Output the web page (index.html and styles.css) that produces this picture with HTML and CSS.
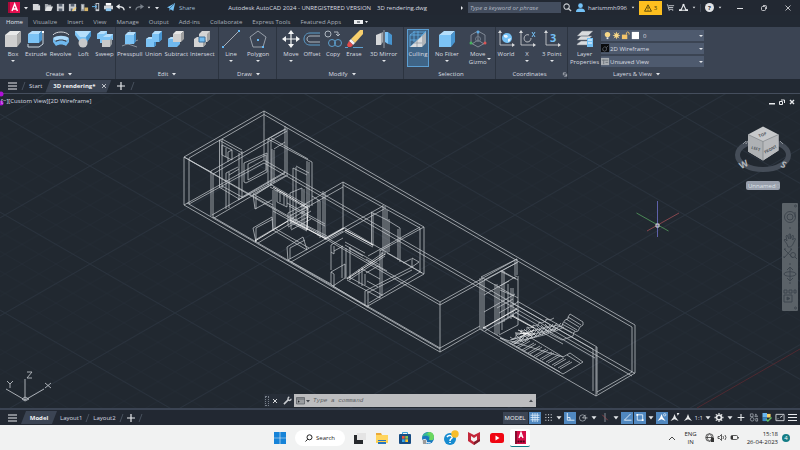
FILE: index.html
```html
<!DOCTYPE html>
<html lang="en">
<head>
<meta charset="utf-8">
<title>Autodesk AutoCAD 2024 - 3D rendering.dwg</title>
<link rel="stylesheet" href="styles.css">
</head>
<body>
<svg class="defs" aria-hidden="true">
  <defs>
    <symbol id="box-grey" viewBox="0 0 18 18"><path fill="#e9e9e9" d="M1 5 6 1h11l-4 4z"/><path fill="#cfcfcf" d="M1 5h12v12H1z"/><path fill="#a9a9a9" d="m13 5 4-4v11l-4 5z"/></symbol>
    <symbol id="box-blue" viewBox="0 0 18 18"><path fill="#b5defb" d="M1 5 6 1h11l-4 4z"/><path fill="#7cc3f5" d="M1 5h12v12H1z"/><path fill="#4794cf" d="m13 5 4-4v11l-4 5z"/></symbol>
    <symbol id="caret" viewBox="0 0 6 4"><path fill="#e3e6ea" d="M1 1h4L3 3.5z"/></symbol>
    <symbol id="menu" viewBox="0 0 10 8"><path stroke="#e8eaed" stroke-width="1.2" d="M0 1h9M0 4h9M0 7h9"/></symbol>
    <symbol id="plus" viewBox="0 0 8 8"><path stroke="#e8eaed" stroke-width="1.2" d="M4 0v8M0 4h8"/></symbol>
  </defs>
</svg>

<header class="titlebar">
  <div class="quick">
    <button class="logo" aria-label="Application menu"><svg viewBox="0 0 12 12"><path fill="#e51050" d="M0 0h12v11H0z"/><path fill="#a80b3a" d="M0 0h2v11H0z"/><path fill="none" stroke="#fff" stroke-width="1.4" d="m4 9 2.700-7L9.400 9M5 7h3.500"/></svg></button>
    <svg class="arrow"><use href="#caret"/></svg>
    <button class="qa" aria-label="New"><svg viewBox="0 0 10 10"><path fill="#d5d7da" d="M1 1h6l2 2v5H1z"/><path fill="#8d939b" d="M7 1v2h2z"/></svg></button>
    <button class="qa" aria-label="Open"><svg viewBox="0 0 10 10"><path fill="#a5a9af" d="M1 1h3l1 1h3v6H1z"/><path fill="#e0e2e4" d="M3 4h7L8 9H1z"/></svg></button>
    <button class="qa" aria-label="Save"><svg viewBox="0 0 10 10"><path fill="#c7cacf" d="M1 1h8v8H1z"/><path fill="#596270" d="M3 1h4v3H3zM3 6h4v3H3z"/></svg></button>
    <button class="qa" aria-label="Save as"><svg viewBox="0 0 10 10"><path fill="#c7cacf" d="M1 1h8v8H1z"/><path fill="#596270" d="M3 1h4v3H3zM3 6h2v3H3z"/><path stroke="#f5cf72" stroke-width="1.500" d="m5 9 4-4"/></svg></button>
    <button class="qa" aria-label="Open from web"><svg viewBox="0 0 10 10"><path fill="#8d939b" d="M1 1h4v8H1z"/><path fill="#cdd0d4" d="M2 2h2v5H2z"/><path fill="#d7b467" d="M5 5h4v4H5z"/></svg></button>
    <button class="qa" aria-label="Save to mobile"><svg viewBox="0 0 10 10"><path fill="#c7cacf" d="M4 0h4v9H4z"/><path fill="#283240" d="M5 1h2v6H5z"/><path stroke="#69b9f1" d="M0 4h5M3 2l2 2-2 2" fill="none"/></svg></button>
    <button class="qa" aria-label="Plot"><svg viewBox="0 0 10 10"><path fill="#fff" d="M2 0h6v3H2z"/><path fill="#d0d3d7" d="M0 3h10v4H0z"/><path fill="#8ac5ee" d="M2 6h6v3H2z"/></svg></button>
    <button class="qa" aria-label="Undo"><svg viewBox="0 0 10 10"><path fill="none" stroke="#e8eaed" stroke-width="1.500" d="M9 8c0-3-3-4-6-4"/><path fill="#e8eaed" d="m0 4 4-3v6z"/></svg></button>
    <svg class="arrow small"><use href="#caret"/></svg>
    <button class="qa" aria-label="Redo"><svg viewBox="0 0 10 10"><path fill="none" stroke="#7a818b" stroke-width="1.200" d="M1 8c0-3 3-4 6-4"/><path fill="#7a818b" d="M10 4 6 1v6z"/></svg></button>
    <svg class="arrow small"><use href="#caret"/></svg>
    <svg class="arrow"><use href="#caret"/></svg>
    <button class="share"><svg viewBox="0 0 10 10"><path fill="#74c2f7" d="m0 5 9-5-2 9-3-2-1 2-.5-3.500z"/><path stroke="#283240" stroke-width=".6" d="m3 6 5-5"/></svg>Share</button>
  </div>
  <h1 class="title"><span>Autodesk AutoCAD 2024 - UNREGISTERED VERSION</span><span>3D rendering.dwg</span></h1>
  <div class="account">
    <svg class="play" viewBox="0 0 4 6"><path fill="#e8eaed" d="m1 1 2 2-2 2z"/></svg>
    <input class="keyword" type="text" aria-label="Search help" placeholder="Type a keyword or phrase">
    <button class="qa" aria-label="Search"><svg viewBox="0 0 10 10"><circle cx="4" cy="4" r="3" fill="none" stroke="#c8ccd1" stroke-width="1.200"/><path stroke="#c8ccd1" stroke-width="1.500" d="m6 6 3 3"/></svg></button>
    <button class="user"><svg viewBox="0 0 10 10"><circle cx="5" cy="3" r="2.600" fill="#74c2f7"/><path fill="#74c2f7" d="M0 10c0-4 3-4 5-4s5 0 5 4z"/></svg>harismmh996</button>
    <svg class="arrow small"><use href="#caret"/></svg>
    <button class="badge"><svg viewBox="0 0 10 10"><path fill="none" stroke="#3e3306" d="m5 1 4.300 8H.7zM5 3.500v3M5 7.200v1"/></svg>3</button>
    <button class="qa" aria-label="App store"><svg viewBox="0 0 10 10"><path fill="none" stroke="#c8ccd1" d="M1 2h1l1 5h5M3 3h6M3 5h5"/><path fill="#c8ccd1" d="M3 8h1v1H3zM7 8h1v1H7z"/></svg></button>
    <button class="qa" aria-label="Autodesk"><svg viewBox="0 0 10 10"><path fill="none" stroke="#e8eaed" stroke-width="1.200" d="M2 8 5 2l3 6z"/><path fill="#e8eaed" d="M0 7h3v2H0zM7 7h3v2H7zM4 1h2v2H4z"/></svg></button>
    <svg class="arrow small"><use href="#caret"/></svg>
    <span class="rule"></span>
    <button class="help">?</button>
    <svg class="arrow small"><use href="#caret"/></svg>
  </div>
  <div class="window-buttons">
    <button aria-label="Minimize"><svg viewBox="0 0 8 8"><path stroke="#dfe1e4" d="M1 4.500h6"/></svg></button>
    <button aria-label="Restore"><svg viewBox="0 0 8 8"><rect x="1.500" y="2.500" width="4" height="4" rx="1" fill="none" stroke="#dfe1e4" stroke-width=".8"/><path fill="none" stroke="#dfe1e4" stroke-width=".8" d="M3 1.500h2.500q1 0 1 1V5"/></svg></button>
    <button aria-label="Close"><svg viewBox="0 0 8 8"><path stroke="#dfe1e4" stroke-width=".8" d="m1.500 1.500 5 5m0-5-5 5"/></svg></button>
  </div>
</header>

<nav class="ribbon-tabs">
  <button class="on">Home</button><button>Visualize</button><button>Insert</button><button>View</button><button>Manage</button><button>Output</button><button>Add-ins</button><button>Collaborate</button><button>Express Tools</button><button>Featured Apps</button>
  <button class="ribbon-toggle" aria-label="Minimize ribbon"><svg viewBox="0 0 16 6"><path fill="#eceef0" d="M0 1h9v4H0z"/><path fill="#29313c" d="M3 2.500h3v1H3z"/><path fill="#eceef0" d="M11 2h3l-1.500 2z"/></svg></button>
</nav>

<section class="ribbon">
  <div class="panel create">
    <div class="tools">
      <button class="tool"><svg><use href="#box-grey"/></svg>Box<i></i></button>
      <button class="tool"><svg viewBox="0 0 18 18"><path fill="#b5defb" d="m1 4 4-3h10l-3 3z"/><path fill="#7cc3f5" d="M1 4h11v9H1z"/><path fill="#4794cf" d="m12 4 3-3v9l-3 3z"/><path fill="none" stroke="#c7d4df" d="M1 14v3h11l4-3V2"/><path fill="#fff" d="M15 1h2v2h-2z"/></svg>Extrude</button>
      <button class="tool"><svg viewBox="0 0 18 18"><path fill="none" stroke="#d4d7db" d="M1 5c3-4 13-4 16 0"/><path fill="#aad9fa" d="M1 8c4-3 12-3 16 0l-2 3c-3-2-9-2-12 0z"/><path fill="#6fb9ef" d="M1 8v4l3 4v-4zm3 4c3-2 7-2 10 0v4c-3-2-7-2-10 0zm10 0 3-4v4l-3 4z"/></svg>Revolve</button>
      <button class="tool"><svg viewBox="0 0 18 18"><path fill="#7cc3f5" d="M1 1h16v4l-4 7H6L1 5z"/><path fill="#b5defb" d="M1 1h16l-5 6H6z"/><path fill="#4794cf" d="M17 1v5l-4 6-1-5z"/><circle cx="9" cy="13" r="4.500" fill="#c8c9ca"/></svg>Loft</button>
      <button class="tool"><svg viewBox="0 0 18 18"><path fill="#7cc3f5" d="M1 4 5 1h6v3h6v6h-6v3H4V9H1z"/><path fill="#b5defb" d="m1 4 4-3h6L8 4zm7 2 3-2h6l-3 3H7z"/><path fill="#c8c9ca" d="M6 10h8v7H6z"/><path fill="#999da1" d="m14 10 2-2v6l-2 3z"/></svg>Sweep</button>
    </div>
    <div class="caption">Create<svg><use href="#caret"/></svg></div>
  </div>
  <div class="panel edit">
    <div class="tools">
      <button class="tool"><svg viewBox="0 0 18 18"><path stroke="#abb3bc" stroke-width=".7" d="M1 16 17 10M4 13l12 4M9 0v4"/><path fill="#b5defb" d="m4 5 3-3h8l-2 3z"/><path fill="#7cc3f5" d="M4 5h9v9H4z"/><path fill="#4794cf" d="m13 5 2-3v9l-2 3z"/></svg>Presspull</button>
      <button class="tool"><svg viewBox="0 0 18 18"><path fill="#7cc3f5" d="M1 9l3-2h3V4l3-3h7v8l-3 3h-3v3l-2 2H1z"/><path fill="#b5defb" d="m7 4 3-3h7l-3 3zM1 9l3-2h3v2z"/><path fill="#4794cf" d="m14 4 3-3v8l-3 3zM10 12h1v3l-2 2v-5z"/></svg>Union</button>
      <button class="tool"><svg viewBox="0 0 18 18"><path fill="#6fb9ef" d="M1 9l3-2h9v7l-3 3H1z"/><path fill="#b5defb" d="m1 9 3-2h9l-3 2z"/><path fill="#e6e6e6" d="m6 4 3-3h8l-3 3z"/><path fill="#cfcfcf" d="M6 4h8v8H6z"/><path fill="#a0a0a0" d="m14 4 3-3v8l-3 3z"/></svg>Subtract</button>
      <button class="tool"><svg viewBox="0 0 18 18"><path fill="#d4d4d4" d="m6 4 3-3h8v8l-3 3H6zM1 9l3-2h9v7l-3 3H1z"/><path fill="#a0a0a0" d="m14 4 3-3v8l-3 3zM10 12l3-2v4l-3 3z"/><path fill="#72bdf2" stroke="#3b6f9b" d="M6 7h6v5H6z"/></svg>Intersect</button>
    </div>
    <div class="caption">Edit<svg><use href="#caret"/></svg></div>
  </div>
  <div class="panel draw">
    <div class="tools">
      <button class="tool"><svg viewBox="0 0 18 18"><path stroke="#c2c8cf" stroke-width=".8" d="M1 17 17 1"/><path fill="#64b5f0" d="M0 16h2v2H0zM16 0h2v2h-2z"/></svg>Line<i></i></button>
      <button class="tool"><svg viewBox="0 0 18 18"><path fill="none" stroke="#aeb6bf" stroke-width=".8" d="m9 1 8 6-3 10H4L1 7z"/><path fill="#64b5f0" d="M8 9h2v2H8zM13 16h2v2h-2z"/></svg>Polygon<i></i></button>
    </div>
    <div class="caption">Draw<svg><use href="#caret"/></svg></div>
  </div>
  <div class="panel modify">
    <div class="tools">
      <button class="tool"><svg viewBox="0 0 18 18"><path stroke="#f4f5f6" stroke-width="1.200" d="M9 2v14M2 9h14"/><path fill="#f4f5f6" d="m9 0 3 4H6zm0 18 3-4H6zM0 9l4-3v6zm18 0-4-3v6z"/></svg>Move<i></i></button>
      <button class="tool"><svg viewBox="0 0 18 18"><path fill="none" stroke="#5d9fcd" d="M17 3H7C-1 3-1 15 7 15h10"/><path fill="none" stroke="#aeb6bf" d="M17 6H7C3 6 3 12 7 12h10"/></svg>Offset</button>
      <button class="tool"><svg viewBox="0 0 18 18"><g fill="none" stroke="#aeb6bf"><circle cx="4" cy="4" r="3"/><path d="M10 2h4v4M12 4l2 2 2-2"/></g><g fill="none" stroke="#5d9fcd"><circle cx="8" cy="13" r="3.500"/><circle cx="14" cy="13" r="3.500"/></g></svg>Copy</button>
      <button class="tool"><svg viewBox="0 0 18 18"><path fill="#f7cf6d" d="M15 0h3v4l-8 9-4-4z"/><path fill="#f3f3f3" d="m6 9 4 4-2 2-4-4z"/><path fill="#e24b4b" d="m4 11 4 4-2 2H3l-1-2z"/><path stroke="#5d9fcd" d="M0 17.500h3M8 17.500h10"/></svg>Erase</button>
      <button class="tool mirror"><svg viewBox="0 0 18 18"><path fill="#d5d7d9" d="M1 5 6 3v12H1z"/><path fill="#9fa4aa" d="m6 3 2-1v10l-2 3z"/><path fill="#7cc3f5" d="M10 2h3v12l-3-2z"/><path fill="#4794cf" d="m13 2 4 3v10l-4-1z"/><path stroke="#d5d7d9" stroke-width=".6" d="M9 0v18"/></svg>3D Mirror<i></i></button>
    </div>
    <div class="caption">Modify<svg><use href="#caret"/></svg></div>
  </div>
  <div class="panel selection">
    <div class="tools">
      <button class="tool on"><svg viewBox="0 0 18 18"><path fill="none" stroke="#5fb0e9" stroke-width=".8" d="M1 5h12v12M1 5v12l16-15H5L1 5m4-4v11M9 1v8M13 5l4-4M1 10h8"/><path fill="#d9dcdf" d="m1 17 12-11v11z"/><path fill="#aeb3b8" d="m13 6 4-4v11l-4 4z"/><path stroke="#7c8792" stroke-width=".6" d="M8 10v7M5 13h8"/></svg>Culling</button>
      <button class="tool"><svg><use href="#box-blue"/></svg>No Filter<i></i></button>
      <button class="tool two"><svg viewBox="0 0 18 18"><path fill="none" stroke="#929ba6" stroke-width=".8" d="m9 1 7 4v8l-7 4-7-4V5zM9 10V3M9 10l-6 4M9 10l6 4"/><circle cx="9" cy="9" r="2.500" fill="none" stroke="#6f7b88"/><circle cx="9" cy="2" r="1.500" fill="#5aa9e6"/><circle cx="2" cy="13" r="1.500" fill="#45b05c"/><circle cx="16" cy="13" r="1.500" fill="#d95555"/></svg>Move<br>Gizmo<i></i></button>
    </div>
    <div class="caption">Selection</div>
  </div>
  <div class="panel coords">
    <div class="tools">
      <button class="tool"><svg viewBox="0 0 18 18"><path fill="none" stroke="#d5d7d9" stroke-width=".8" d="M3 1v14h14"/><path fill="#d5d7d9" d="M3 0 1 3h4zM18 15l-3-2v4z"/><circle cx="10" cy="8" r="5" fill="#75c1f5"/><path fill="#e6f3fc" d="M7 5h3l1 2-2 1-2-1zM11 9l3-1-1 3-2 1z"/></svg>World</button>
      <button class="tool"><svg viewBox="0 0 18 18"><path fill="none" stroke="#d5d7d9" stroke-width=".8" d="M3 1v14h14M11 5c-5-2-7 6-2 7 3 0 4-2 4-4"/><path fill="#d5d7d9" d="M3 0 1 3h4zM18 15l-3-2v4z"/><path stroke="#75c1f5" d="m14 2 3 5m0-5-3 5"/></svg>X<i></i></button>
      <button class="tool"><svg viewBox="0 0 18 18"><path fill="none" stroke="#d5d7d9" stroke-width=".8" d="M3 1v14h14"/><path fill="#d5d7d9" d="M3 0 1 3h4zM18 15l-3-2v4z"/><text x="7" y="12" fill="#75c1f5" font-size="11" font-weight="700">3</text></svg>3 Point<i></i></button>
    </div>
    <div class="caption">Coordinates<svg class="launch" viewBox="0 0 6 6"><path fill="none" stroke="#c8ccd1" stroke-width=".8" d="M1 4V1h3M2 2l3 3V2M5 5H2"/></svg></div>
  </div>
  <div class="panel layers">
    <div class="tools">
      <button class="tool two"><svg viewBox="0 0 18 18"><path fill="#d9dbdd" stroke="#6c7480" stroke-width=".5" d="m1 14 4-3h11l-4 4H1zm0-4 4-4h11l-4 4zm0-4 5-5h11l-5 5z"/><path fill="#75c1f5" d="M11 8h6v9h-6z"/><path stroke="#fff" d="M12 10h4M12 13h4"/></svg>Layer<br>Properties</button>
      <div class="selects">
        <label class="layer-select"><svg viewBox="0 0 40 10"><circle cx="5" cy="4" r="3" fill="#f6d788"/><path fill="#e5e7e9" d="M4 7h2v2H4z"/><circle cx="15" cy="5" r="2.500" fill="#f6d788"/><path stroke="#f6d788" stroke-width=".8" d="M15 1v8M11 5h8m-7-3 6 6m0-6-6 6"/><path fill="#f6c56a" d="M21 4h6v5h-6z"/><path fill="none" stroke="#f6c56a" d="M26 4V2q1.500-2 3 0v2"/><path fill="#fff" d="M32 1h8v8h-8z"/></svg><select aria-label="Layer"><option>0</option></select><i></i></label>
        <label><svg viewBox="0 0 10 10"><path fill="#0a0b0d" d="M0 0h9v9H0z"/><path fill="none" stroke="#87909a" stroke-width=".6" d="M2 5l2-2 2 1v3L4 8 2 7zM6 4l2-2"/></svg><select aria-label="Visual style"><option>2D Wireframe</option></select><i></i></label>
        <label><svg viewBox="0 0 10 10"><path fill="#a9adb2" d="M0 1h9v8H0z"/><path stroke="#6c737b" d="M1 3.500h7M3 3v5M5 6h3"/></svg><select aria-label="View"><option>Unsaved View</option></select><i></i></label>
      </div>
    </div>
    <div class="caption">Layers &amp; View<svg><use href="#caret"/></svg></div>
  </div>
</section>

<nav class="doc-tabs">
  <button class="burger" aria-label="File tabs menu"><svg><use href="#menu"/></svg></button>
  <span class="slash"></span>
  <button>Start</button>
  <button class="active">3D rendering*<svg viewBox="0 0 6 6"><path stroke="#c8ccd1" stroke-width=".9" d="m1 1 4 4m0-4L1 5"/></svg></button>
  <button class="add" aria-label="New drawing"><svg><use href="#plus"/></svg></button>
  <span class="slash"></span>
</nav>

<main class="viewport">
  <svg class="model" viewBox="0 94 800 314" preserveAspectRatio="xMidYMid slice" role="img" aria-label="Wireframe of a building">
    <defs>
      <pattern id="minor" width="34" height="19.600" patternUnits="userSpaceOnUse" x="5" y="-.6"><path fill="none" stroke="#252d37" stroke-width=".6" d="M0 0 34 19.600M0 19.600 34 0"/></pattern>
      <pattern id="major" width="170" height="98" patternUnits="userSpaceOnUse" x="5" y="19"><path fill="none" stroke="#2b343f" stroke-width=".8" d="m0 0 170 98M0 98 170 0"/></pattern>
    </defs>
    <path fill="url(#minor)" d="M0 94h800v314H0z"/>
    <path fill="url(#major)" d="M0 94h800v314H0z"/>
    <path stroke="#5b2a31" stroke-width=".8" d="m697 408 103-59"/>
    <g class="wire">
      <!-- outer shell -->
      <path d="M184 157 264 111 635 325V373L596 396 480 329 440 352 184 205zM189 158 264 114.500 632 327V372L597 392M184 157 440 302M189 160 440 305M184 205 264 160 635 373.500M189 204 264 163 632 376M189 158V204M264 111V160M213 217 440 348 480 326M440 302V352M440 302 517 259M440 305 517 262.500M187 203 440 349"/>
      <!-- north-west rooms -->
      <path d="M211 171 285 129M213 174 287 131M211 171V216M213 174V218M184 157 211 172M212 215 285 173M214 218 288 175M285 126V173M287 128V175M219.500 140V187M222 139V188M219 140 242 153M222 139 242 150M239 153V200M242 151V198M219 187 239 199M222 186 242 197M226 173V209M229 172V208M226 173 238 167M229 175 239 169M232 150 222 145V155L232 160V150L228 152V162M226 148V157M244 163 267 153V172L246 183 244 182V163M248 164 266 155V170L248 180zM242 197 285 172M238 200 285 176"/>
      <!-- second room and corridor -->
      <path d="M268 139 286 129M268 139 312 162M271 138 308 159M268 139V185M271 140V186M272 149V182M274 150V183M274 149 285 142M307 161V230M309 162V208M312 162V206M293 168V222M296 167V220M293 168 307 175M296 166 309 173M270 184 310 207M270 187 308 209M253 194 272 184M253 194 255 209 272 200M256 196V209M253 194 273 205M277 190 287 195V207L277 202zM280 192V202M284 194V205M287 203 325 224M289 206 325 226M300 207 343 182M302 210 343 187M325 192V238M323 191V237M318 200V236M320 201V238M312 196 320 201M255 240 308 209M258 243 311 211M253 228 272 217 273 230M253 228 256 242V228L273 219M287 247 303 237 307 250M287 247 288 261M290 248V259M290 248 305 240M288 260 345 228M291 262 345 231M273 230 307 250M276 229 309 248M273 190V230M275 190V229M302 188V226M304 189V228M290 193 302 188M290 193V222M290 222 307 231M288 213 306 204M290 216 308 206M288 227 308 217M291 230 311 219M288 213V226M291 214V229M290 220 325 238M292 218 327 236M307 230 273 211M269 186 255 195"/>
      <!-- central block -->
      <path d="M343 182 424 227V274L366 307M343 185 420 228V272L369 303M343 182V228M345 228 424 274M343 228 325 238M343 231 328 239M424 227 380 251M420 227 368 256M383 206 340 230M384 209 345 231M371.500 212V245M373 213V246M383 205V254M385 206V255M387 210V252M371 212 387 220M387 220 400 228V262M389 219V252M398 229V260M345 230 373 245M345 232 373 247M387 253 422 273M383 253 347 278M385 256 349 280M347 280 380 298M349 277 382 295M365 291 412 267M367 293 412 270M365 291V306M368 293V308M412 267V258L419 262 412 267M411 259 403 263M331 270 331 245 343 238M334 251 343 246M331 252 334 254V246M331 272 345 264V278L333 286 331 284V272L334 274V286M342 246V278M346 248V279M350 247V280M345 242 365 253M345 245 380 265M349 248 363 256M359 269V284M362 267V286M380 250V298M382 252V296M362 269 380 279M366 259 380 267M366 273 378 266 387 271M365 274V285M367 281 378 287M333 286 366 306M288 260 331 284"/>
      <!-- stair hall -->
      <path d="M480 278V329M482 278V330M484 280V329M481 277 517 259M484 280 518 262M515 261V276M517 259V275M518 276V325M500 271 516 279M502 271 518 280M484 295 517 276M484 312 515 294M483 329 517 308M485 331 519 311M495 284V334M497 284V335M499 286V334M502 270V330M504 271V322M508 284V318M511 288V319M513 288V317M500 290 514 296M497 308 513 299M499 313 518 302M498 324 514 315M499 335 518 325M500 286 509 281M481 277 518 298M596 347V396M597 347V394M593 349V391M597 347 517 301M593 349 512 303M483 327 560 372M512 315 563 344M515 312 595 358"/>
      <!-- lower flight -->
      <path d="M500 338 563 374 583 362 570 353 563 357zM567 355l13 8M523 333 563 357"/>
      <path d="M510 344l12-7m-10 8l12-7m-8 9l12-7m-10 8l12-7m-8 9l12-7m-10 8l12-7m-8 9l12-7m-10 8l12-7m-8 9l12-7m-10 8l12-7m-8 9l12-7m-10 8l12-7m-8 9l12-7m-10 8l12-7m-8 9l12-7m-10 8l12-7m-8 9l12-7m-10 8l12-7"/>
      <!-- upper flight -->
      <path d="M570 314l13 8m-15-5l13 8m-15-6l13 8m-15-5l13 8m-15-6l13 7m-16-5l13 7M570 314l-2 3v2l-3 1-2 3-1 3-4 1M583 322v3l-3 2-2 4-4 1-1 4-11 4-12-6"/>
      <path d="M510 337l3 2 3-2v-3l3 1 2-2v-3l3 1 3-1v-3l3 1 3-1v-2l3 1 3-2v-2l3 1 4-2v-2l4 1 4-2M512 342l10-2 10-2 12-3 14-5 6-3M510 340l48-12M514 344l42-15M520 334l38-9"/>
      <path d="M511 340l11-4m-7 8l11-11m-6 9l9-12m-4 11l9-12m-4 10l8-11m-4 10l8-11m-4 9l8-10m-4 9l8-10m-4 8l7-9m-3 8l7-9m-3 8l7-8M516 335l8 8m-4-12l9 9m-5-11l9 9m-5-10l9 9m-4-10l8 8m-4-9l8 8m-4-9l8 8m-4-9l7 7"/>
      <path class="bright" d="M515 333l20 1M518 330l14 6M520 337l14-7M483 328l34-19M512 316l22 12M273 187l35 21M308 208l-1 22M290 220l36 19M255 241l33-20M345 230l28 15M347 279l38-25M344 228l-19 11"/>
    </g>
    <g fill="none" stroke-width=".9">
      <path stroke="#4e9159" d="m636.500 213 32 18"/><path stroke="#914a51" d="m647 231 32-18"/><path stroke="#6568b8" d="M657.500 201v36"/><path stroke="#e8eaed" d="M656 224h3v3h-3z"/>
    </g>
    <g fill="none" stroke="#b9bdc3" stroke-width=".9">
      <path d="M25 400v-21M25 400 6 389M25 400l19-11M22 399l3-2 4 2-4 2z"/>
      <path d="m7 381 3 3 3-3m-3 3v4M27 372h5l-5 6h5M45 383l6 5m0-5-6 5"/>
    </g>
    <g>
      <ellipse cx="763" cy="155" rx="25.500" ry="14.500" fill="none" stroke="#454d58" stroke-width="5"/>
      <path fill="#c7c9cb" d="m763 126.500 15.500 8v16L763 160.500l-15-9V134.500z"/>
      <path fill="#aeb1b4" d="m748 134.500 15 7v19l-15-9z"/><path fill="#b8babd" d="m778.500 134.500-15.500 7v19l15.500-10z"/>
      <path fill="none" stroke="#73787e" stroke-width=".6" d="m748 134.500 15 7 15.500-7M763 141.500v19"/>
      <g fill="#4c5157" font-size="4" font-weight="700"><text transform="rotate(-22 763 136)" x="759" y="136">TOP</text><text transform="rotate(17 752 149)" x="751" y="149">LEFT</text><text transform="rotate(-28 770 150)" x="764" y="151">FRONT</text></g>
      <g fill="#b3b7bc" font-size="9" font-weight="700"><text transform="rotate(-28 743 166)" x="740" y="168">W</text><text transform="rotate(25 784 165)" x="781" y="168">S</text></g>
      <path stroke="#8b9199" d="m743 144 3-3v3l2-3M780 141l3 3"/>
    </g>
    <g fill="#b010d8"><circle cx="1" cy="94" r="2.500"/><circle cx="1" cy="103" r="2.500"/></g>
  </svg>
  <button class="view-label">[−][Custom View][2D Wireframe]</button>
  <div class="doc-buttons">
    <button aria-label="Minimize drawing"><svg viewBox="0 0 6 6"><path fill="#e8eaed" d="M0 4h6v1.500H0z"/></svg></button>
    <button aria-label="Restore drawing"><svg viewBox="0 0 6 6"><path fill="none" stroke="#e8eaed" d="M.5 2.500h3v3h-3zM2 1h3.500v3"/></svg></button>
    <button aria-label="Close drawing"><svg viewBox="0 0 6 6"><path stroke="#e8eaed" stroke-width="1.400" d="m1 1 4 4m0-4L1 5"/></svg></button>
  </div>
  <button class="ucs">Unnamed<svg viewBox="0 0 6 6"><path fill="none" stroke="#b9bec6" stroke-width=".6" d="M1 1h4v4H1z"/></svg></button>
  <div class="navbar">
    <svg viewBox="0 0 16 108" fill="none" stroke="#3b434c" stroke-width=".9"><circle cx="13.500" cy="3" r="1"/><circle cx="8" cy="14" r="5.500"/><circle cx="8" cy="14" r="3"/><path d="M13 9v5"/><path d="M7 25h2M7 61h2M7 80h2"/><path d="m5 41-3-4 1-1 2 2-1-5 1-1 2 4V31h1.500v5l2-4 1 1-1 4 2-2 1 1-3 6-2 2H6z"/><path d="m2 46 9 9M10 46l-8 9M2 46h2M8 46h2M2 55v-2"/><circle cx="11" cy="52" r="2.500"/><path d="m13 54 2 2M8 65v12M5 67l3-3 3 3M5 75l3 3 3-3M2 71c0-3 12-3 12 0s-12 3-12 0"/><path d="M2 87h3v3H2zM7 87h3v3H7zM12 87h2v3h-2zM2 92h8v7H2z"/><path fill="#3b434c" d="m5 94 3 1.500L5 97z"/><circle cx="13.500" cy="105" r="1"/></svg>
  </div>
  <form class="command">
    <span class="grip"></span>
    <button type="button" aria-label="Close command line"><svg viewBox="0 0 6 6"><path stroke="#d5d7da" d="m1 1 4 4m0-4L1 5"/></svg></button>
    <button type="button" class="wrench" aria-label="Customize"><svg viewBox="0 0 10 10"><path stroke="#c9ccd0" stroke-width="1.700" d="m1 9 5-5"/><path fill="none" stroke="#c9ccd0" stroke-width="1.500" d="M7 1c-2 1-2 4 0 4 1 0 2 0 2-2"/></svg></button>
    <div class="field"><svg viewBox="0 0 14 8"><path fill="#9a9da0" stroke="#55595e" stroke-width=".7" d="M.5.5h8v6.500h-8z"/><path stroke="#55595e" stroke-width=".7" d="M.5 2h8M2 3.500 3.500 4.500 2 5.500"/><path fill="#44484d" d="M10 3h4l-2 2.500z"/></svg><input type="text" aria-label="Command" placeholder="Type a command"><svg class="up" viewBox="0 0 6 4"><path fill="#44484d" d="M1 3h4L3 .5z"/></svg></div>
  </form>
</main>

<footer class="status">
  <nav class="layouts">
    <button class="burger" aria-label="Layouts menu"><svg><use href="#menu"/></svg></button>
    <button class="active">Model</button>
    <button>Layout1</button><span class="slash"></span>
    <button>Layout2</button><span class="slash"></span>
    <button class="add" aria-label="New layout"><svg><use href="#plus"/></svg></button><span class="slash"></span>
  </nav>
  <div class="modes">
    <button class="model-mode">MODEL</button>
    <button class="st on" aria-label="Grid"><svg viewBox="0 0 10 10"><path stroke="#dfeefb" stroke-width=".9" d="M2.500 0v10M5 0v10M7.500 0v10M0 2.500h10M0 5h10M0 7.500h10"/></svg></button>
    <button class="st" aria-label="Snap"><svg viewBox="0 0 10 10"><path stroke="#d5d8dc" stroke-width="1.200" stroke-dasharray="1.200 1.800" d="M2 2h8M2 5h8M2 8h8"/></svg></button>
    <svg class="drop"><use href="#caret"/></svg>
    <button class="st on" aria-label="Ortho"><svg viewBox="0 0 10 10"><path fill="none" stroke="#e5f0fa" d="M2 0v8h8M2 5h3v3"/></svg></button>
    <button class="st" aria-label="Polar"><svg viewBox="0 0 10 10"><circle cx="4.500" cy="5.500" r="3.500" fill="none" stroke="#a8afb8" stroke-width=".8"/><path stroke="#d5d8dc" stroke-width=".8" d="M4.500 5.500H10M4.500 5.500 8 2"/></svg></button>
    <svg class="drop"><use href="#caret"/></svg>
    <button class="st" aria-label="Isodraft"><svg viewBox="0 0 10 10"><path stroke="#a8afb8" stroke-width=".8" d="M5 0v10"/><path stroke="#a94b50" stroke-width=".8" d="m2 2 6 6"/></svg></button>
    <svg class="drop"><use href="#caret"/></svg>
    <button class="st on" aria-label="Object snap tracking"><svg viewBox="0 0 10 10"><path fill="none" stroke="#e5f0fa" d="M9 1 2 8h8"/></svg></button>
    <button class="st on" aria-label="Object snap"><svg viewBox="0 0 10 10"><path fill="none" stroke="#e5f0fa" d="M2 2h6v6H2z"/><path fill="#fff" d="M1 1h2v2H1zM7 7h2v2H7z"/></svg></button>
    <svg class="drop"><use href="#caret"/></svg>
    <button class="st on" aria-label="Annotation visibility"><svg viewBox="0 0 10 10"><path fill="#fff" d="M4.500 1 6 5l3 4-4.500-2L0 9l3-4z"/><circle cx="8" cy="2" r="1.300" fill="none" stroke="#fff" stroke-width=".7"/></svg></button>
    <button class="st" aria-label="Auto scale"><svg viewBox="0 0 10 10"><path fill="#e5e7e9" d="M4.500 1 6 5l3 4-4.500-2L0 9l3-4zM7 0h3L8 3z"/></svg></button>
    <button class="st" aria-label="Annotation scale"><svg viewBox="0 0 10 10"><path fill="#e5e7e9" d="M5 1 6.500 5l3 4L5 7 .5 9l3-4z"/></svg></button>
    <button class="scale">1:1</button>
    <svg class="drop"><use href="#caret"/></svg>
    <button class="st" aria-label="Workspace"><svg viewBox="0 0 10 10"><circle cx="5" cy="5" r="2.700" fill="none" stroke="#e5e7e9" stroke-width="1.800"/><path stroke="#e5e7e9" stroke-width="1.400" stroke-dasharray="1.500 7 1.500 0" d="M5 0v10M0 5h10M1.500 1.500l7 7M8.500 1.500l-7 7"/></svg></button>
    <svg class="drop"><use href="#caret"/></svg>
    <button class="st" aria-label="Annotation monitor"><svg viewBox="-1 -1 10 10"><use href="#plus" width="8" height="8"/></svg></button>
    <button class="st" aria-label="Isolate"><svg viewBox="0 0 10 10"><g fill="none" stroke="#a8afb8" stroke-width=".8"><circle cx="3" cy="7" r="2"/><path d="M1 1h3v3H1zM7 1l2 3H6zM7 6h2v3H7z"/></g></svg></button>
    <button class="st" aria-label="Graphics performance"><svg viewBox="0 0 10 10"><path fill="#68b5ee" d="M0 0h5v5H0z"/><path fill="#3987c5" d="M0 5h5v4H0z"/><path fill="#f6cf66" d="M5 1h4v4H5z"/><path fill="none" stroke="#62c06b" stroke-width="1.500" d="m4 7 2 2 4-4"/></svg></button>
    <button class="st" aria-label="Clean screen"><svg viewBox="0 0 10 10"><path fill="none" stroke="#d5d8dc" d="M.5 1.500h9v7h-9zM5 5l3-2M2 7l1-1"/></svg></button>
    <button class="st" aria-label="Customization"><svg viewBox="0 0 10 8"><use href="#menu" width="10" height="8"/></svg></button>
  </div>
</footer>

<nav class="taskbar">
  <div class="apps">
    <button class="app" aria-label="Start"><svg viewBox="0 0 14 14"><path fill="#1683d8" d="M1 1h5.700v5.700H1zM7.300 1H13v5.700H7.300zM1 7.300h5.700V13H1zM7.300 7.300H13V13H7.300z"/></svg></button>
    <button class="find"><svg viewBox="0 0 8 8"><circle cx="4.500" cy="3.300" r="2.500" fill="none" stroke="#222"/><path stroke="#222" d="M2.700 5.200.5 7.500"/></svg>Search</button>
    <button class="app" aria-label="Task view"><svg viewBox="0 0 14 14"><path fill="#c9c9c9" d="M5 2h9v7h-3v4H5z"/><path fill="#26292c" d="M2 4h9v9H2z"/><path fill="#e4e4e4" d="M5 2h9v7H5z"/></svg></button>
    <button class="app" aria-label="File Explorer"><svg viewBox="0 0 14 14"><path fill="#eba937" d="M1 2h5l1 2h6v8H1z"/><path fill="#ffd55d" d="M1 4h12v8H1z"/><path fill="#2775bd" d="M3 9h8v4H3z"/><path fill="#ffcf4b" d="M1 10h12v1H1z"/></svg></button>
    <button class="app" aria-label="Store"><svg viewBox="0 0 14 14"><path fill="none" stroke="#3aa0d8" d="M4.500 4V1.500h5V4"/><rect x="1" y="3" width="12" height="10" rx="1" fill="#174d83"/><path fill="#ee573a" d="M4 5h2.700v2.700H4z"/><path fill="#8bc34a" d="M7.300 5H10v2.700H7.300z"/><path fill="#37a8e8" d="M4 8.300h2.700V11H4z"/><path fill="#ffc52e" d="M7.300 8.300H10V11H7.300z"/></svg></button>
    <button class="app" aria-label="Edge"><svg viewBox="0 0 14 14"><circle cx="7" cy="7" r="6" fill="#1977bf"/><path fill="#39bd91" d="M1 6c2-6 12-7 12 1 0 3-5 3-5 1 1-4-5-4-7-2z"/><path fill="#6bd65e" d="M8 1c5 0 6 5 4 8H8c2-3 1-5-2-6z"/><path fill="#eff9ff" d="M5 7c-2 3 1 5 5 4-2 3-7 1-5-4z"/><circle cx="3.500" cy="10.500" r="2.500" fill="#e3e3e3"/><path stroke="#555" d="M2 10h3M2 12h3"/></svg></button>
    <button class="app" aria-label="Help"><svg viewBox="0 0 14 14"><circle cx="6" cy="8" r="6" fill="#168bd0"/><path fill="none" stroke="#fff" stroke-width="1.500" d="M3 6c2-3 6-1 5 1-1 1-2 1-2 3M6 11v1"/><circle cx="11" cy="3" r="3.700" fill="#f8bd2a"/></svg></button>
    <button class="app" aria-label="McAfee"><svg viewBox="0 0 14 14"><path fill="#c3283b" d="m1 1 6 3 6-3v9l-6 4-6-4z"/><path fill="#f2f2f2" d="m4 5 3 2 3-2v4l-3 2-3-2z"/><path fill="#7e1d2b" d="m7 11 6-3v2l-6 4z"/></svg></button>
    <button class="app" aria-label="YouTube"><svg viewBox="0 0 14 14"><rect y="2" width="14" height="10" rx="2.500" fill="#f00612"/><path fill="#fff" d="m5.500 4.500 4 2.500-4 2.500z"/></svg></button>
    <button class="app current" aria-label="AutoCAD"><svg viewBox="0 0 14 14"><path fill="#d50e48" d="M2 0h11v13H2z"/><path fill="#860f30" d="M2 0h2v13H2z"/><path fill="none" stroke="#fff" stroke-width="1.300" d="m6 7 2-5.500L10 7M7 5h2"/><path stroke="#4b071c" stroke-width="2" stroke-dasharray="2 .6" d="M4.500 10.500h7.500"/></svg></button>
  </div>
  <div class="tray">
    <button aria-label="Hidden icons"><svg viewBox="0 0 8 8"><path fill="none" stroke="#333" stroke-width=".9" d="m1 6 3-3 3 3"/></svg></button>
    <button class="lang">ENG<br>IN</button>
    <button class="net" aria-label="Network, volume and battery"><svg viewBox="0 0 34 9"><g fill="none" stroke="#333" stroke-width=".8"><circle cx="4.500" cy="4.500" r="3.800"/><path d="M1 4.500h7M4.500 1c-3 2-3 5 0 7 3-2 3-5 0-7M13 3.500h1.500l2-2v6l-2-2H13zM18 3q1 1.500 0 3M20 2q2 2.500 0 5"/><rect x="26" y="2.500" width="6.500" height="4" rx="1"/><path d="M33.500 4v1.500"/></g><path fill="#333" d="M6 5h3v4H6zM26 3h2v3h-2z"/></svg></button>
    <button class="clock">15:18<br>26-04-2023</button>
    <span class="count">4</span>
  </div>
</nav>
</body>
</html>
```
FILE: styles.css
```css
* { box-sizing: border-box; }

html, body { height: 100%; margin: 0; }

body {
  display: flex;
  flex-direction: column;
  overflow: hidden;
  background: #222933;
  color: #d9dce0;
  font: 6px/8px "Open Sans", "Noto Sans", sans-serif;
}

button, input, select {
  margin: 0;
  padding: 0;
  border: 0;
  background: none;
  color: inherit;
  font: inherit;
}

button { white-space: nowrap; }
svg { display: block; flex: none; overflow: visible; }
.defs { position: absolute; width: 0; height: 0; }

/* title bar */
.titlebar {
  display: flex;
  align-items: center;
  flex: none;
  height: 15px;
  background: #222832;
}
.quick, .account, .window-buttons { display: flex; align-items: center; flex: none; }
.quick { padding-left: 8px; gap: 3px; }
.logo svg { width: 12px; height: 12px; }
.arrow { width: 6px; height: 4px; }
.arrow.small { width: 4px; height: 3px; }
.qa svg { width: 9px; height: 9px; }
.share { display: flex; align-items: center; gap: 3px; margin-left: 4px; color: #9db9d0; }
.share svg { width: 9px; height: 9px; }
.title {
  display: flex;
  flex: 1;
  gap: 6px;
  justify-content: center;
  margin: 0;
  font: inherit;
  white-space: nowrap;
}
.account { height: 100%; gap: 4px; }
.play { width: 4px; height: 6px; }
.keyword {
  width: 93px;
  height: 11px;
  padding: 0 2px;
  background: #434d5e;
  margin-right: -2px;
}
.keyword::placeholder { color: #b3bac4; font-style: italic; opacity: 1; }
.user { display: flex; align-items: center; gap: 3px; }
.user svg { width: 9px; height: 9px; }
.badge {
  display: flex;
  align-items: center;
  justify-content: center;
  gap: 2px;
  width: 23px;
  height: 14px;
  background: #fdbf1f;
  color: #3e3306;
}
.badge svg { width: 8px; height: 8px; }
.rule { width: 1px; height: 8px; background: #3b4350; }
.help {
  width: 9px;
  height: 9px;
  border-radius: 50%;
  background: #e2e4e7;
  color: #222832;
  font-weight: 700;
}
.window-buttons { gap: 16px; padding: 0 8px 0 14px; }
.window-buttons svg { width: 8px; height: 8px; }

/* ribbon tabs */
.ribbon-tabs { display: flex; flex: none; height: 12px; padding-top: 2px; color: #a9b0ba; }
.ribbon-tabs button { padding: 0 5px; }
.ribbon-tabs .on { padding: 0 5px 0 6px; background: #3b4453; color: #e3e6ea; }
.ribbon-toggle svg { width: 16px; height: 6px; margin-left: 3px; }

/* ribbon */
.ribbon { display: flex; flex: none; height: 52px; background: #3b4453; }
.panel {
  display: flex;
  flex-direction: column;
  justify-content: space-between;
  flex: none;
  border-right: 1px solid #2c3440;
}
.tools { display: flex; align-items: flex-start; height: 40px; padding-top: 2px; }
.tool {
  position: relative;
  display: flex;
  flex-direction: column;
  align-items: center;
  min-width: 17px;
  height: 38px;
  padding-top: 1px;
}
.tool svg { width: 18px; height: 18px; margin-bottom: 2px; }
.tool i, .selects i {
  border: 2px solid transparent;
  border-top-color: #e3e6ea;
  border-bottom: 0;
}
.tool i { margin-top: 2px; }
.tool.two i { position: absolute; right: -4px; bottom: 7px; }
.tool.on { width: 22px; background: #3f6486; outline: 1px solid #5c9fd3; outline-offset: -1px; }
.caption {
  display: flex;
  align-items: center;
  justify-content: center;
  gap: 3px;
  height: 10px;
}
.caption svg { width: 6px; height: 4px; }
.caption .launch { height: 5px; margin-left: 12px; margin-right: -16px; }
.create { width: 116px; padding-left: 4px; }
.create .tools { gap: 3px; }
.edit { width: 103px; padding-left: 1px; }
.edit .tools { gap: 2px; }
.draw { width: 58px; padding-left: 3px; }
.draw .tools { gap: 7px; }
.modify { width: 127px; padding-left: 5px; }
.modify .tools { gap: 3px; }
.mirror { margin-left: 4px; }
.selection { width: 92px; padding-left: 3px; }
.selection .tools { gap: 6px; }
.selection .two { margin-left: 4px; }
.coords { width: 72px; padding-left: 1px; }
.coords .tools { gap: 3px; }
.coords .tool:last-child { margin-left: 3px; }
.layers { flex: 1; padding-left: 2px; border-right: 0; }
.selects { display: flex; flex-direction: column; gap: 2px; margin-left: 2px; padding-top: 1px; }
.selects label { position: relative; display: block; }
.selects label > svg { position: absolute; left: 0; top: 1px; width: 9px; height: 9px; }
.selects .layer-select > svg { width: 40px; }
.selects i { position: absolute; right: 1px; top: 5px; pointer-events: none; }
.selects select {
  display: block;
  width: 103px;
  height: 11px;
  padding-left: 9px;
  appearance: none;
  border-radius: 0;
  background: #4e5a6e;
}
.selects .layer-select select { padding-left: 42px; }
.layers .caption { width: 134px; }

/* document and layout tabs */
.doc-tabs {
  display: flex;
  align-items: center;
  flex: none;
  height: 15px;
  gap: 3px;
  border-bottom: 1px solid #454e5d;
}
.burger { padding-left: 8px; }
.burger svg { width: 10px; height: 8px; }
.add svg { width: 8px; height: 8px; }
.slash { width: 1px; height: 8px; margin: 0 2px; background: #47505d; transform: skewX(-20deg); }
.active {
  display: flex;
  align-items: center;
  justify-content: center;
  gap: 5px;
  background: #3b4453;
  clip-path: polygon(5px 0, 100% 0, calc(100% - 5px) 100%, 0 100%);
  color: #f0f2f4;
  font-weight: 700;
}
.doc-tabs .active { height: 13px; padding: 0 5px 0 8px; }
.active svg { width: 6px; height: 6px; }
.doc-tabs .add { margin: 0 2px; }

/* drawing area */
.viewport { position: relative; flex: 1; min-height: 0; background: #212830; }
.model { position: absolute; inset: 0; width: 100%; height: 100%; }
.wire { fill: none; stroke: #ccd0d4; stroke-width: .7; }
.wire .bright { stroke: #fff; stroke-width: 1; stroke-opacity: .8; }
.view-label { position: absolute; left: 1px; top: 3px; }
.doc-buttons { position: absolute; right: 5px; top: 5px; display: flex; gap: 4px; }
.doc-buttons svg { width: 6px; height: 6px; }
.ucs {
  position: absolute;
  right: 20px;
  top: 87px;
  display: flex;
  align-items: center;
  justify-content: space-between;
  width: 34px;
  height: 9px;
  padding: 0 2px;
  border-radius: 2px;
  background: #989fac;
  color: #dfe3e8;
}
.ucs svg { width: 4px; height: 4px; }
.navbar { position: absolute; right: 2px; top: 109px; background: #5b6268; border-radius: 1px; }
.navbar svg { width: 16px; height: 108px; }
.command {
  position: absolute;
  left: 33%;
  right: 33%;
  bottom: 1px;
  display: flex;
  align-items: center;
  height: 13px;
  background: #272e38;
}
.grip { width: 4px; height: 10px; margin: 0 3px 0 1px; border: 1px dotted #78808a; }
.command button svg { width: 6px; height: 6px; }
.command .wrench svg { width: 9px; height: 9px; margin: 0 2px 0 5px; }
.field {
  display: flex;
  align-items: center;
  flex: 1;
  height: 13px;
  padding: 0 2px;
  background: #bcbdbf;
}
.field svg { width: 14px; height: 8px; }
.field .up { width: 6px; height: 4px; }
.field input {
  flex: 1;
  min-width: 0;
  padding-left: 3px;
  font: italic 6px/8px "Liberation Mono", monospace;
}
.field input::placeholder { color: #5a5d61; opacity: 1; }

/* status bar */
.status {
  display: flex;
  align-items: center;
  justify-content: space-between;
  flex: none;
  height: 17px;
  border-top: 2px solid #3b4453;
  background: #222832;
}
.layouts, .modes { display: flex; align-items: center; }
.layouts { gap: 3px; }
.layouts .active { width: 36px; height: 13px; }
.modes { gap: 1px; padding-right: 1px; }
.model-mode { width: 25px; height: 12px; background: #3b4453; color: #eef0f2; }
.st { display: grid; place-items: center; width: 12px; height: 12px; }
.st svg { width: 10px; height: 9px; }
.st.on { background: #5088c0; }
.drop { width: 8px; height: 5px; }

/* taskbar */
.taskbar {
  display: grid;
  grid-template-columns: 1fr auto 1fr;
  align-items: center;
  flex: none;
  height: 25px;
  background: #f1f2f2;
  color: #222;
}
.apps { display: flex; grid-column: 2; align-items: center; gap: 9px; }
.app svg { width: 14px; height: 14px; }
.find {
  display: flex;
  align-items: center;
  justify-content: center;
  gap: 3px;
  width: 50px;
  height: 16px;
  margin: 0 -2px 0 -1px;
  border-radius: 8px;
  background: #fff;
}
.find svg { width: 8px; height: 8px; }
.current { padding: 2px 3px 1px; margin: 0 -3px; border-radius: 2px; background: #fff; border-bottom: 1px solid #147d86; }
.tray { display: flex; align-items: center; justify-content: flex-end; gap: 8px; padding-right: 10px; }
.tray button:first-child svg { width: 8px; height: 8px; }
.lang { text-align: center; }
.net svg { width: 34px; height: 9px; }
.clock { text-align: right; }
.count {
  width: 8px;
  border-radius: 50%;
  background: #147d86;
  color: #fff;
  text-align: center;
}
.tray .count { margin-left: -4px; }
```
